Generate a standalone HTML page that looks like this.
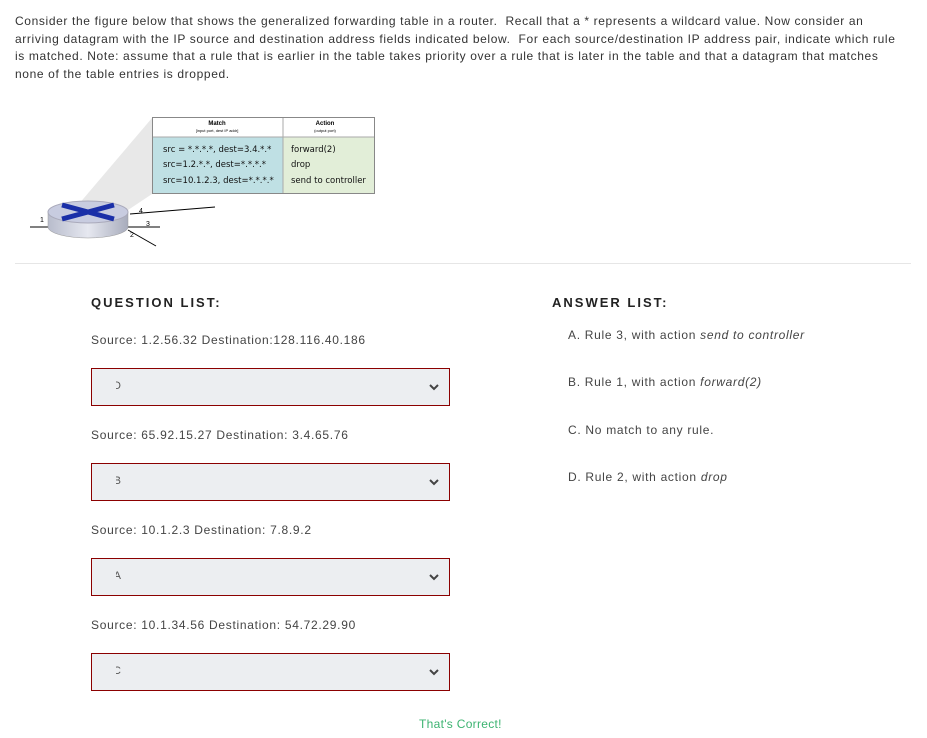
<!DOCTYPE html>
<html><head><style>
body{margin:0;background:#fff;font-family:"Liberation Sans",Arial,sans-serif;color:#333;width:927px;height:738px;overflow:hidden;position:relative}
.intro{position:absolute;left:15px;top:13px;width:910px;font-size:12px;line-height:17.5px;letter-spacing:0.63px;color:#333;white-space:nowrap}
.hr{position:absolute;left:15px;top:263px;width:896px;height:1px;background:#e6e6e6}
.h{position:absolute;font-size:13px;font-weight:bold;letter-spacing:2px;color:#222}
.q{position:absolute;left:91px;font-size:12px;letter-spacing:0.7px;color:#444}
.sel{position:absolute;left:91px;width:357px;height:36px;border:1px solid #8b0000;background:#eceef1}
.sel .l{position:absolute;left:24px;top:11px;width:5px;overflow:hidden;font-size:11px;color:#555;direction:rtl}
.sel svg{position:absolute;right:10px;top:15px}
.a{position:absolute;left:568px;font-size:12px;letter-spacing:0.7px;color:#444}
</style></head><body>
<div class="intro">Consider the figure below that shows the generalized forwarding table in a router.&nbsp; Recall that a * represents a wildcard value. Now consider an<br>arriving datagram with the IP source and destination address fields indicated below.&nbsp; For each source/destination IP address pair, indicate which rule<br>is matched. Note: assume that a rule that is earlier in the table takes priority over a rule that is later in the table and that a datagram that matches<br>none of the table entries is dropped.</div>

<svg style="position:absolute;left:0;top:110px" width="400" height="150">
<defs><linearGradient id="g" x1="0" x2="1"><stop offset="0" stop-color="#b8bccc"/><stop offset=".5" stop-color="#e6e8f0"/><stop offset="1" stop-color="#a8acbc"/></linearGradient></defs>
<polygon points="152,8 78,95 128,100 152,84" fill="#e8e8e8"/>
<line x1="30" y1="117" x2="160" y2="117" stroke="#000"/>
<line x1="130" y1="104" x2="215" y2="97" stroke="#000"/>
<line x1="128" y1="120" x2="156" y2="136" stroke="#000"/>
<path d="M48,102 v15 a40,11 0 0 0 80,0 v-15z" fill="url(#g)" stroke="#999" stroke-width=".5"/>
<ellipse cx="88" cy="102" rx="40" ry="11" fill="#c8cce0" stroke="#aab"/>
<path d="M62,95 L114,109 M62,109 L114,95" stroke="#1a2fa8" stroke-width="5"/>
<text x="40" y="112" font-size="7" font-family="Liberation Sans">1</text>
<text x="139" y="103" font-size="7" font-family="Liberation Sans">4</text>
<text x="146" y="116" font-size="7" font-family="Liberation Sans">3</text>
<text x="130" y="127" font-size="7" font-family="Liberation Sans">2</text>
<rect x="152.5" y="7.5" width="222" height="76" fill="#fff" stroke="#888"/>
<rect x="153" y="27" width="130" height="56" fill="#bfe0e4"/>
<rect x="283" y="27" width="91" height="56" fill="#e2eed8"/>
<line x1="283" y1="8" x2="283" y2="83" stroke="#aaa"/>
<line x1="153" y1="27" x2="374" y2="27" stroke="#aaa"/>
<text x="217" y="15" font-size="6" text-anchor="middle" font-weight="bold" font-family="Liberation Sans">Match</text>
<text x="217" y="22" font-size="4" text-anchor="middle" font-family="Liberation Sans">[input port, dest IP addr]</text>
<text x="325" y="15" font-size="6" text-anchor="middle" font-weight="bold" font-family="Liberation Sans">Action</text>
<text x="325" y="22" font-size="4" text-anchor="middle" font-family="Liberation Sans">(output port)</text>
<g font-size="8.5" font-family="DejaVu Sans, sans-serif" fill="#111">
<text x="163" y="42">src = *.*.*.*, dest=3.4.*.*</text>
<text x="163" y="57">src=1.2.*.*, dest=*.*.*.*</text>
<text x="163" y="73">src=10.1.2.3, dest=*.*.*.*</text>
<text x="291" y="42">forward(2)</text>
<text x="291" y="57">drop</text>
<text x="291" y="73">send to controller</text>
</g></svg>

<div class="hr"></div>
<div class="h" style="left:91px;top:295px">QUESTION LIST:</div>
<div class="h" style="left:552px;top:295px">ANSWER LIST:</div>

<div class="q" style="top:333px">Source: 1.2.56.32 Destination:128.116.40.186</div>
<div class="sel" style="top:368px"><span class="l">D</span><svg width="10" height="7"><path d="M1,1 L5,5 L9,1" stroke="#444" stroke-width="2" fill="none"/></svg></div>
<div class="q" style="top:428px">Source: 65.92.15.27 Destination: 3.4.65.76</div>
<div class="sel" style="top:463px"><span class="l">B</span><svg width="10" height="7"><path d="M1,1 L5,5 L9,1" stroke="#444" stroke-width="2" fill="none"/></svg></div>
<div class="q" style="top:523px">Source: 10.1.2.3 Destination: 7.8.9.2</div>
<div class="sel" style="top:558px"><span class="l">A</span><svg width="10" height="7"><path d="M1,1 L5,5 L9,1" stroke="#444" stroke-width="2" fill="none"/></svg></div>
<div class="q" style="top:618px">Source: 10.1.34.56 Destination: 54.72.29.90</div>
<div class="sel" style="top:653px"><span class="l">C</span><svg width="10" height="7"><path d="M1,1 L5,5 L9,1" stroke="#444" stroke-width="2" fill="none"/></svg></div>

<div class="a" style="top:328px">A. Rule 3, with action <i>send to controller</i></div>
<div class="a" style="top:375px">B. Rule 1, with action <i>forward(2)</i></div>
<div class="a" style="top:423px">C. No match to any rule.</div>
<div class="a" style="top:470px">D. Rule 2, with action <i>drop</i></div>

<div style="position:absolute;left:419px;top:717px;font-size:12px;color:#3cb371;letter-spacing:0.3px">That's Correct!</div>
</body></html>
